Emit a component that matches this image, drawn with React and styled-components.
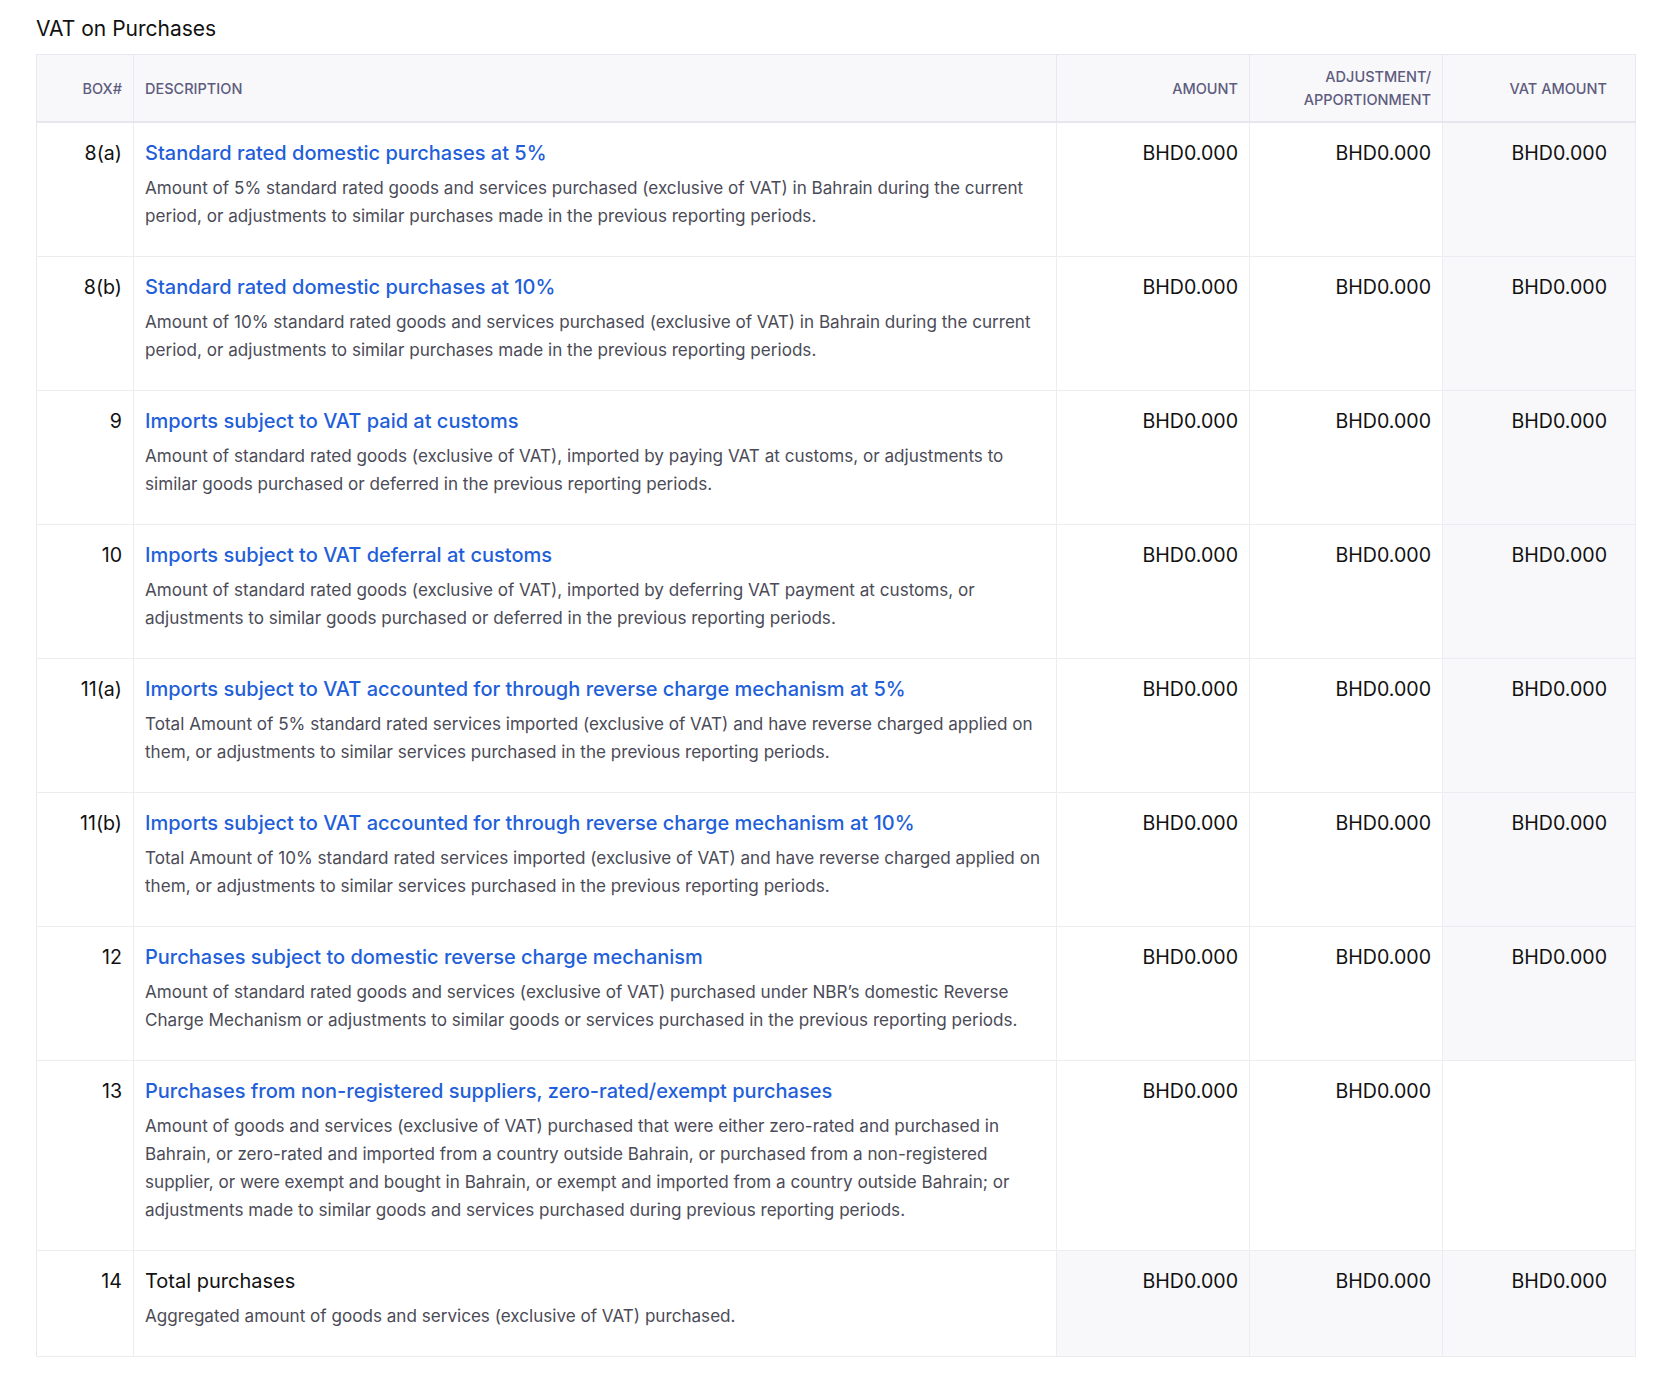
import React from "react";
import styled, { createGlobalStyle } from "styled-components";

const Global = createGlobalStyle`
  body { margin: 0; background: #fff; font-family: Inter, "Noto Sans", sans-serif; color: #111; }
`;

const Page = styled.div`
  padding: 14px 38px 40px 36px;
`;
const Title = styled.h2`
  margin: 0 0 10px 0;
  font-size: 21px;
  font-weight: 400;
  line-height: 30px;
  color: #111;
`;
const Table = styled.table`
  width: 100%;
  border-collapse: collapse;
  table-layout: fixed;
  border: 1px solid #e8e8ee;
`;
const Th = styled.th`
  background: #f8f8fb;
  height: 66px;
  padding: 0 ${p => (p.$last ? "28px" : "11px")} 0 11px;
  border-right: 1px solid #e8e8ee;
  border-bottom: 2px solid #e6e6ef;
  text-align: ${p => p.$align || "right"};
  font-size: 14.5px;
  font-weight: 500;
  color: #5e5c7e;
  text-transform: uppercase;
  line-height: 23px;
  vertical-align: middle;
`;
const Td = styled.td`
  vertical-align: top;
  padding: 16px ${p => (p.$last ? "28px" : "11px")} 26px 11px;
  border-right: 1px solid #ececf1;
  border-bottom: 1px solid #ececf1;
  text-align: ${p => p.$align || "right"};
  background: ${p => (p.$shade ? "#f8f8fb" : "#fff")};
  font-size: 19.6px;
  line-height: 28px;
  color: #111;
`;
const Link = styled.div`
  color: ${p => (p.$plain ? "#111" : "#1f5fd9")};
  font-size: 20px;
  font-weight: ${p => (p.$plain ? 400 : 500)};
  line-height: 28px;
`;
const Desc = styled.div`
  margin-top: 7px;
  color: #4b4b57;
  font-size: 17.1px;
  line-height: 28px;
`;

const rows = [
  ["8(a)", "Standard rated domestic purchases at 5%", "Amount of 5% standard rated goods and services purchased (exclusive of VAT) in Bahrain during the current period, or adjustments to similar purchases made in the previous reporting periods."],
  ["8(b)", "Standard rated domestic purchases at 10%", "Amount of 10% standard rated goods and services purchased (exclusive of VAT) in Bahrain during the current period, or adjustments to similar purchases made in the previous reporting periods."],
  ["9", "Imports subject to VAT paid at customs", "Amount of standard rated goods (exclusive of VAT), imported by paying VAT at customs, or adjustments to similar goods purchased or deferred in the previous reporting periods."],
  ["10", "Imports subject to VAT deferral at customs", "Amount of standard rated goods (exclusive of VAT), imported by deferring VAT payment at customs, or adjustments to similar goods purchased or deferred in the previous reporting periods."],
  ["11(a)", "Imports subject to VAT accounted for through reverse charge mechanism at 5%", "Total Amount of 5% standard rated services imported (exclusive of VAT) and have reverse charged applied on them, or adjustments to similar services purchased in the previous reporting periods."],
  ["11(b)", "Imports subject to VAT accounted for through reverse charge mechanism at 10%", "Total Amount of 10% standard rated services imported (exclusive of VAT) and have reverse charged applied on them, or adjustments to similar services purchased in the previous reporting periods."],
  ["12", "Purchases subject to domestic reverse charge mechanism", "Amount of standard rated goods and services (exclusive of VAT) purchased under NBR’s domestic Reverse Charge Mechanism or adjustments to similar goods or services purchased in the previous reporting periods."],
  ["13", "Purchases from non-registered suppliers, zero-rated/exempt purchases", "Amount of goods and services (exclusive of VAT) purchased that were either zero-rated and purchased in Bahrain, or zero-rated and imported from a country outside Bahrain, or purchased from a non-registered supplier, or were exempt and bought in Bahrain, or exempt and imported from a country outside Bahrain; or adjustments made to similar goods and services purchased during previous reporting periods.", "noVat"],
  ["14", "Total purchases", "Aggregated amount of goods and services (exclusive of VAT) purchased.", "total"],
];

const V = "BHD0.000";

export default function App() {
  return (
    <Page>
      <Global />
      <Title>VAT on Purchases</Title>
      <Table>
        <colgroup>
          <col style={{ width: "97px" }} />
          <col />
          <col style={{ width: "193px" }} />
          <col style={{ width: "193px" }} />
          <col style={{ width: "193px" }} />
        </colgroup>
        <thead>
          <tr>
            <Th>Box#</Th>
            <Th $align="left">Description</Th>
            <Th>Amount</Th>
            <Th>Adjustment/<br />Apportionment</Th>
            <Th $last>VAT Amount</Th>
          </tr>
        </thead>
        <tbody>
          {rows.map(([box, title, desc, kind]) => (
            <tr key={box}>
              <Td>{box}</Td>
              <Td $align="left">
                <Link $plain={kind === "total"}>{title}</Link>
                <Desc>{desc}</Desc>
              </Td>
              <Td $shade={kind === "total"}>{V}</Td>
              <Td $shade={kind === "total"}>{V}</Td>
              <Td $last $shade={kind !== "noVat"}>{kind === "noVat" ? "" : V}</Td>
            </tr>
          ))}
        </tbody>
      </Table>
    </Page>
  );
}
